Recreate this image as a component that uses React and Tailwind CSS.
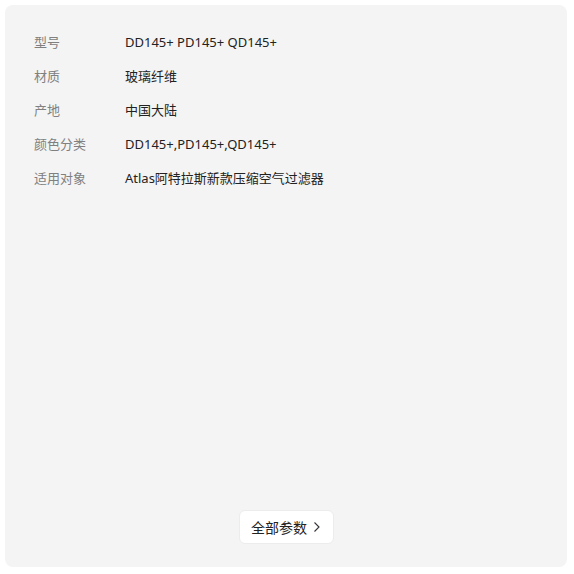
import React from "react";

const rows = [
  ["型号", "DD145+ PD145+ QD145+"],
  ["材质", "玻璃纤维"],
  ["产地", "中国大陆"],
  ["颜色分类", "DD145+,PD145+,QD145+"],
  ["适用对象", "Atlas阿特拉斯新款压缩空气过滤器"],
];

export default function App() {
  return (
    <div
      className="w-[574px] h-[574px] bg-white p-[5px] pr-[7px] pb-[7px]"
      style={{ fontFamily: '"Noto Sans", "Noto Sans CJK SC", sans-serif' }}
    >
      <div className="h-full rounded-lg bg-[#f4f4f4] flex flex-col pt-[28px] pl-[29px] pb-[23px]">
        {/* Params */}
        <div className="flex flex-col gap-[14px]">
          {rows.map(([k, v]) => (
            <div key={k} className="flex items-center h-[20px] text-[13px]">
              <span className="w-[91px] text-[#808080]">{k}</span>
              <span className="text-[#222]">{v}</span>
            </div>
          ))}
        </div>

        <div className="flex-1" />

        {/* Footer */}
        <div className="flex justify-center pr-[29px]">
          <button className="h-[34px] w-[95px] rounded-md bg-white border border-[#ececec] flex items-center justify-center gap-[5px] text-[14px] text-[#222]">
            全部参数
            <svg width="9" height="12" viewBox="0 0 9 12" fill="none">
              <path d="M2.5 1.5 L7 6 L2.5 10.5" stroke="#333" strokeWidth="1.1" />
            </svg>
          </button>
        </div>
      </div>
    </div>
  );
}
